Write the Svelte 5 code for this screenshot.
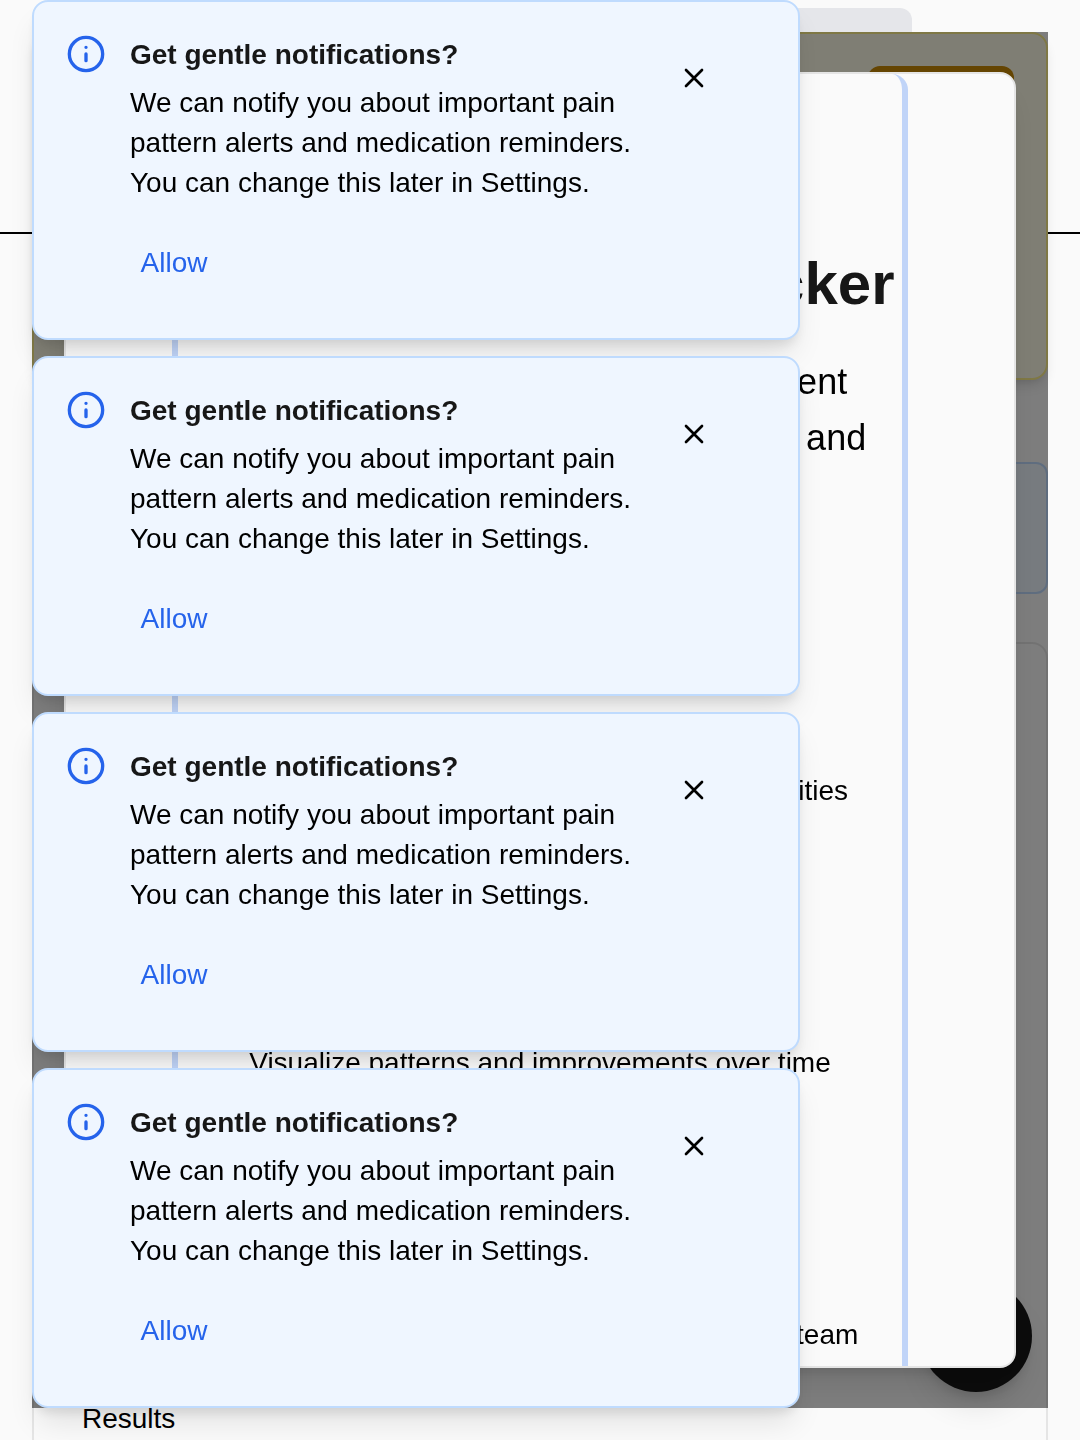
<script>
  let toasts = $state([1, 2, 3, 4]);

  const features = [
    'Record pain levels, symptoms, and daily activities',
    'Visualize patterns and improvements over time',
    'Share exportable reports with your healthcare team'
  ];

  function dismiss(id) {
    toasts = toasts.filter((t) => t !== id);
  }
</script>

<div class="shell">
  <header class="topbar">
    <div class="placeholder"></div>
  </header>

  <main class="content">
    <section class="note"></section>
    <section class="results">
      <div class="chart"></div>
      <p>Results</p>
    </section>
  </main>

  <aside class="alert">
    <button class="alert-action" type="button" aria-label="Open alert"></button>
  </aside>

  <button class="fab" type="button" aria-label="Add entry"></button>

  <div class="overlay">
    <div class="dialog" role="dialog" aria-labelledby="welcome-title">
      <div class="panel">
        <h1 id="welcome-title">Welcome to Pain Tracker</h1>
        <p class="lead">
          The comprehensive pain management<br />
          companion for monitoring, exploring, and
        </p>
        <ul class="features">
          {#each features as feature}
            <li>
              <span class="feature-mark"></span>
              <p>{feature}</p>
            </li>
          {/each}
        </ul>
      </div>
    </div>
  </div>

  <div class="toasts">
    {#each toasts as id (id)}
      <section class="toast" role="status">
        <svg class="info" viewBox="0 0 24 24" aria-hidden="true">
          <circle cx="12" cy="12" r="10" />
          <path d="M12 16v-4M12 8h.01" />
        </svg>
        <div class="toast-body">
          <h3>Get gentle notifications?</h3>
          <p>
            We can notify you about important pain pattern alerts and medication reminders. You can
            change this later in Settings.
          </p>
          <button class="allow" type="button">Allow</button>
        </div>
        <button class="close" type="button" aria-label="Close" onclick={() => dismiss(id)}>
          <svg viewBox="0 0 24 24" aria-hidden="true"><path d="M18 6 6 18M6 6l12 12" /></svg>
        </button>
      </section>
    {/each}
  </div>
</div>

<style>
  :global(body) {
    background: #fafafa;
  }

  .shell {
    height: 100vh;
    overflow: hidden;
    background: #fafafa;
    color: #000;
    font: 28px/40px 'Liberation Sans', Arial, sans-serif;
  }

  .shell * {
    box-sizing: border-box;
  }

  h1, h3, p, ul {
    margin: 0;
    padding: 0;
  }

  button {
    padding: 0;
    border: 0;
    background: none;
    font: inherit;
    cursor: pointer;
  }

  .topbar {
    height: 234px;
    padding: 8px 168px;
    border-bottom: 2px solid #000;
  }

  .placeholder {
    height: 88px;
    border-radius: 12px;
    background: #e5e6ea;
  }

  .content {
    display: flex;
    flex-direction: column;
    gap: 48px;
    padding: 228px 32px 0;
  }

  .note {
    height: 132px;
    border: 2px solid #bfdbfe;
    border-radius: 12px;
    background: #eff6ff;
  }

  .results {
    padding: 48px;
    border: 2px solid #e5e5e5;
    border-radius: 16px;
  }

  .chart {
    height: 707px;
  }

  .alert {
    position: fixed;
    inset: 32px 32px auto;
    display: flex;
    justify-content: flex-end;
    align-items: flex-start;
    height: 348px;
    padding: 32px;
    border: 2px solid #fef08a;
    border-radius: 16px;
    background: #fefce8;
    box-shadow: 0 8px 12px -2px rgba(0, 0, 0, 0.1), 0 4px 8px -4px rgba(0, 0, 0, 0.1);
  }

  .alert-action {
    width: 146px;
    height: 88px;
    border-radius: 12px;
    background: #ca8a04;
  }

  .fab {
    position: fixed;
    right: 48px;
    bottom: 48px;
    width: 112px;
    height: 112px;
    border-radius: 50%;
    background: #171717;
    box-shadow: 0 20px 30px -6px rgba(0, 0, 0, 0.1), 0 8px 12px -4px rgba(0, 0, 0, 0.1);
  }

  .overlay {
    position: fixed;
    inset: 32px;
    display: flex;
    padding: 40px 32px;
    background: rgba(0, 0, 0, 0.5);
  }

  .dialog {
    flex: 1;
    overflow: hidden;
    padding: 0 106px;
    border: 2px solid #e5e5e5;
    border-radius: 16px;
    background: #fafafa;
    box-shadow: 0 20px 30px -6px rgba(0, 0, 0, 0.1), 0 8px 12px -4px rgba(0, 0, 0, 0.1);
  }

  .panel {
    padding: 174px 0 48px;
    border: solid #c0d4f8;
    border-width: 0 6px;
    border-radius: 16px;
    text-align: center;
  }

  h1 {
    color: #171717;
    font-size: 60px;
    line-height: 72px;
    white-space: nowrap;
  }

  .lead {
    margin-top: 34px;
    font-size: 36px;
    line-height: 56px;
    white-space: nowrap;
  }

  .features {
    display: grid;
    gap: 88px;
    margin-top: 161px;
    list-style: none;
  }

  .features li {
    display: flex;
    flex-direction: column;
    align-items: center;
    gap: 80px;
    white-space: nowrap;
  }

  .feature-mark {
    width: 64px;
    height: 64px;
    border-radius: 50%;
    background: #dbeafe;
  }

  .toasts {
    position: fixed;
    top: 0;
    left: 32px;
    display: grid;
    gap: 16px;
    width: 768px;
    max-width: calc(100% - 64px);
  }

  .toast {
    display: flex;
    align-items: flex-start;
    padding: 32px 32px 31px;
    border: 2px solid #bfdbfe;
    border-radius: 16px;
    background: #eff6ff;
    box-shadow: 0 20px 30px -6px rgba(0, 0, 0, 0.1), 0 8px 12px -4px rgba(0, 0, 0, 0.1);
  }

  svg {
    display: block;
    fill: none;
    stroke: currentColor;
    stroke-width: 2;
    stroke-linecap: round;
    stroke-linejoin: round;
  }

  .info {
    flex: none;
    width: 40px;
    height: 40px;
    margin-right: 24px;
    color: #2563eb;
  }

  .toast-body {
    flex: 1;
    min-width: 0;
    padding-top: 1px;
  }

  h3 {
    margin-bottom: 8px;
    color: #171717;
    font-size: 28px;
    line-height: 40px;
  }

  .allow {
    min-width: 88px;
    height: 88px;
    margin-top: 16px;
    color: #2563eb;
  }

  .close {
    display: grid;
    place-items: center;
    flex: none;
    width: 88px;
    height: 88px;
    margin-right: 28px;
    color: #000;
  }

  .close svg {
    width: 32px;
    height: 32px;
  }
</style>
